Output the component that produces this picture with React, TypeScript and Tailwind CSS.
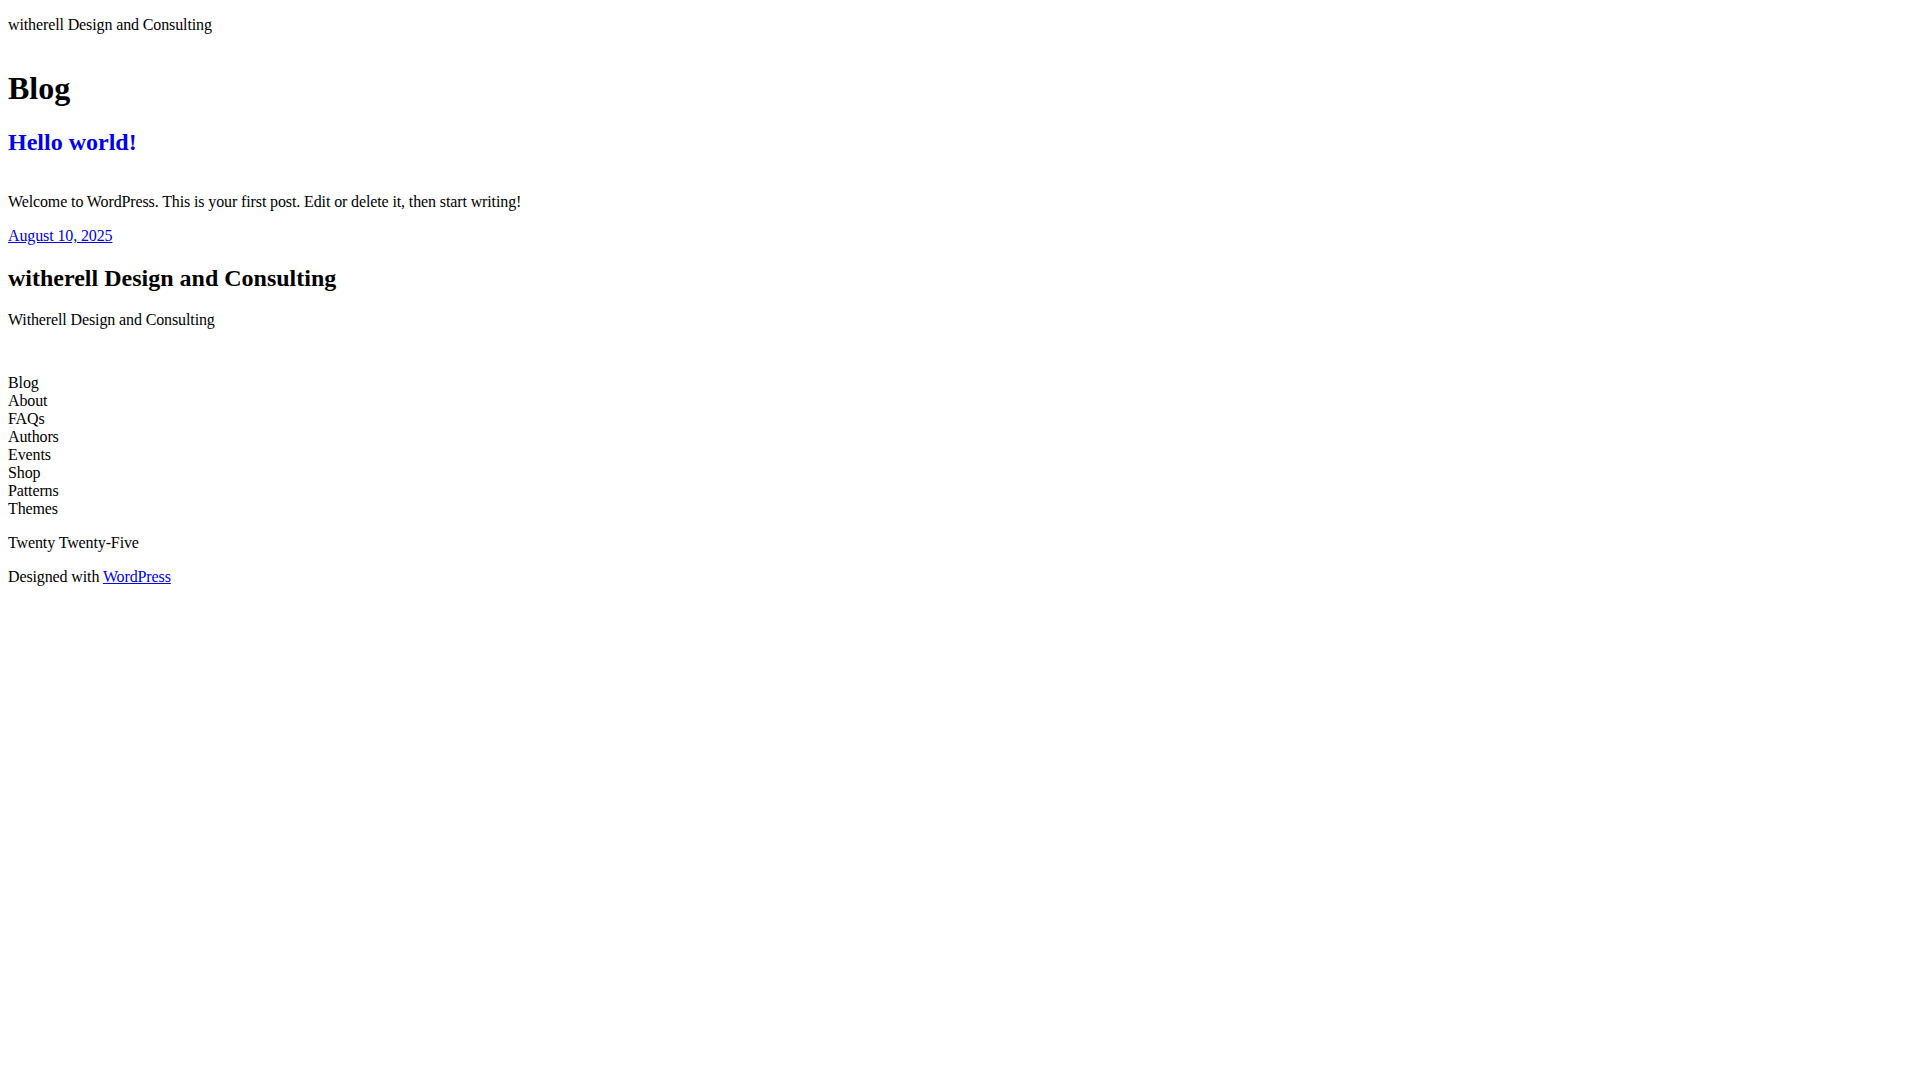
export default function App() {
  const navItems = ['Blog', 'About', 'FAQs', 'Authors', 'Events', 'Shop', 'Patterns', 'Themes']

  return (
    <div className="min-h-screen bg-white px-[8px] pt-[16px] font-['Liberation_Serif','Times_New_Roman',serif] text-[16px] leading-[normal] tracking-[-0.12px] text-black">
      {/* site header */}
      <header>
        <p>witherell Design and Consulting</p>
      </header>

      {/* main */}
      <main>
        <h1 className="mt-[35.8px] text-[32px] font-bold leading-[normal] tracking-normal">Blog</h1>
        <h2 className="mt-[22.6px] text-[24px] font-bold leading-[normal] tracking-normal">
          <a href="#" className="text-[#0000ee] no-underline">
            Hello world!
          </a>
        </h2>
        <p className="mt-[36.6px]">Welcome to WordPress. This is your first post. Edit or delete it, then start writing!</p>
        <p className="mt-[16px]">
          <a href="#" className="text-[#0000ee] underline">
            August 10, 2025
          </a>
        </p>
      </main>

      {/* footer */}
      <footer>
        <h2 className="mt-[20px] text-[24px] font-bold leading-[normal] tracking-normal">witherell Design and Consulting</h2>
        <p className="mt-[19px]">Witherell Design and Consulting</p>
        <nav className="mt-[45.2px]">
          <ul>
            {navItems.map((item) => (
              <li key={item}>{item}</li>
            ))}
          </ul>
        </nav>
        <p className="mt-[16px]">Twenty Twenty-Five</p>
        <p className="mt-[16px]">
          Designed with{' '}
          <a href="#" className="text-[#0000ee] underline">
            WordPress
          </a>
        </p>
      </footer>
    </div>
  )
}
